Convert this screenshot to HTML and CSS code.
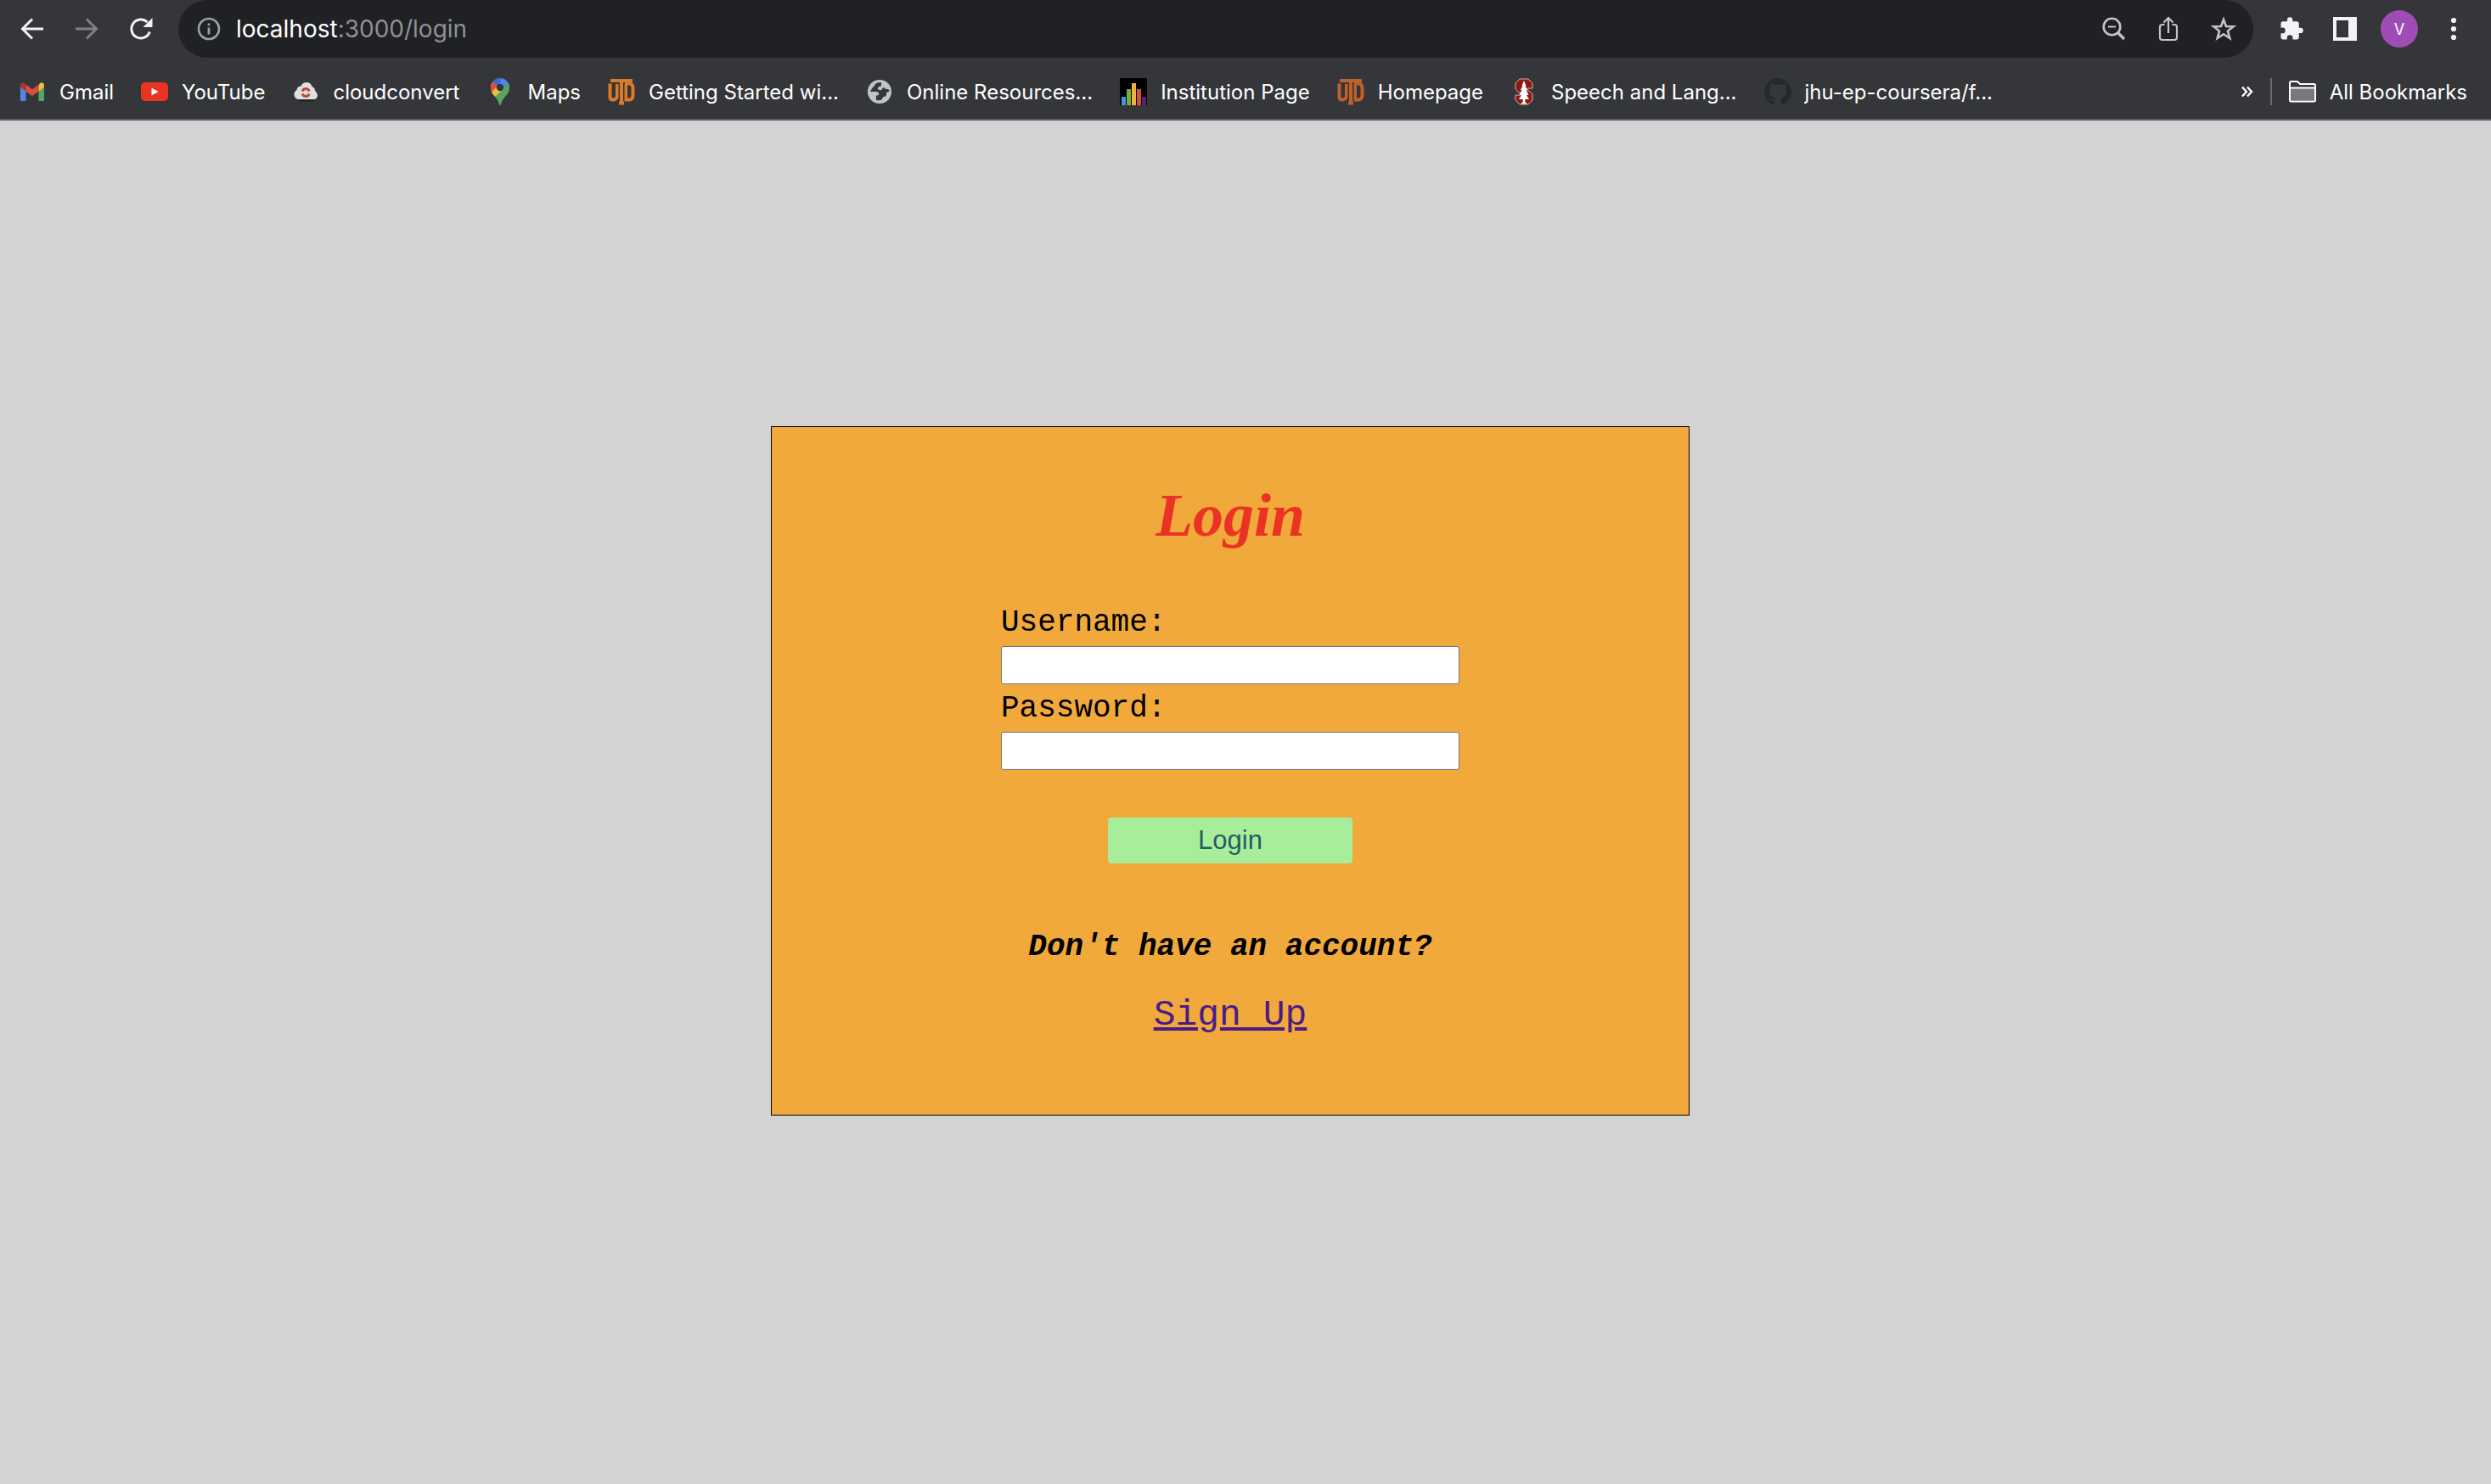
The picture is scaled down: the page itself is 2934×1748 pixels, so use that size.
FILE: index.html
```html
<!DOCTYPE html>
<html lang="en">
<head>
<meta charset="utf-8">
<title>Login</title>
<link rel="stylesheet" href="styles.css">
</head>
<body>
<header class="browser">
  <div class="toolbar">
    <button class="tool" aria-label="Back"><svg width="28" height="28" viewBox="0 0 28 28" fill="none" stroke="#f1f3f4" stroke-width="3"><path d="M27 14H3M14 2.500L2.500 14L14 25.500"/></svg></button>
    <button class="tool" aria-label="Forward"><svg width="28" height="28" viewBox="0 0 28 28" fill="none" stroke="#808184" stroke-width="3"><path d="M1 14H25M14 2.500L25.500 14L14 25.500"/></svg></button>
    <button class="tool" aria-label="Reload"><svg width="28" height="28" viewBox="0 0 28 28"><path d="M24.300 17.500A11 11 0 1 1 21.500 6" fill="none" stroke="#f1f3f4" stroke-width="3"/><path d="M27.500 1V12H16.500Z" fill="#f1f3f4"/></svg></button>
    <div class="omnibox">
      <button class="mini" aria-label="Site information"><svg width="28" height="28" viewBox="0 0 28 28"><circle cx="14" cy="14" r="12" fill="none" stroke="#9aa0a6" stroke-width="2.600"/><path d="M14 12.500V20.500M14 7.500V10.300" stroke="#9aa0a6" stroke-width="2.800"/></svg></button>
      <div class="url"><span class="host">localhost</span>:3000/login</div>
      <div class="omni-actions">
        <button class="mini" aria-label="Zoom"><svg width="28" height="28" viewBox="0 0 28 28" fill="none" stroke="#c4c5c7"><circle cx="11.500" cy="11.500" r="9.800" stroke-width="2.600"/><path d="M18.500 18.500L26 26" stroke-width="3.400"/><path d="M7 11.500H16" stroke-width="2"/></svg></button>
        <button class="mini" aria-label="Share"><svg width="28" height="30" viewBox="0 0 28 30" fill="none" stroke="#c4c5c7" stroke-width="2.200"><path d="M9.500 10H7a3 3 0 0 0-3 3v12a3 3 0 0 0 3 3h14a3 3 0 0 0 3-3V13a3 3 0 0 0-3-3h-2.500M14 20V3M8.500 7.500L14 2L19.500 7.500"/></svg></button>
        <button class="mini" aria-label="Bookmark this tab"><svg width="30" height="30" viewBox="0 0 30 30" fill="none" stroke="#c4c5c7" stroke-width="2.600"><path d="M15 4L18 12L26.500 12.300L19.900 17.600L22.300 26L15 21.200L7.700 26L10.100 17.600L3.500 12.300L12 12Z"/></svg></button>
      </div>
    </div>
    <div class="extras">
      <button class="tool" aria-label="Extensions"><svg width="30" height="30" viewBox="0 0 24 24" fill="#f1f3f4"><path d="M20.500 11H19V7c0-1.100-.9-2-2-2h-4V3.500a2.500 2.500 0 0 0-5 0V5H4c-1.100 0-2 .9-2 2v3.800h1.500a2.700 2.700 0 0 1 0 5.400H2V20c0 1.100.9 2 2 2h3.800v-1.500a2.700 2.700 0 0 1 5.400 0V22H17c1.100 0 2-.9 2-2v-4h1.500a2.500 2.500 0 0 0 0-5z"/></svg></button>
      <button class="tool panel" aria-label="Side panel"><svg width="28" height="28" viewBox="0 0 28 28"><path d="M0 0H28V28H0ZM4 4V24H18V4Z" fill="#f1f3f4" fill-rule="evenodd"/></svg></button>
      <button class="avatar" aria-label="Profile">V</button>
      <button class="tool menu" aria-label="Menu"><svg width="28" height="28" viewBox="0 0 28 28" fill="#f1f3f4"><circle cx="14" cy="4" r="3.100"/><circle cx="14" cy="14" r="3.100"/><circle cx="14" cy="24" r="3.100"/></svg></button>
    </div>
  </div>
  <nav class="bookmarks">
    <a class="mark" href="#"><svg width="32" height="32" viewBox="0 0 32 32"><path d="M2 8V25.500q0 1.500 1.500 1.500H8.500V14Z" fill="#4f86ec"/><path d="M30 8V25.500q0 1.500-1.500 1.500H23.500V14Z" fill="#58a55c"/><path d="M23.500 8.500V15.500L30 10.500V8Q29 4 25 6Z" fill="#f2bf42"/><path d="M8.500 8.500V15.500L2 10.500V8Q3 4 7 6Z" fill="#b6332a"/><path d="M8.500 7.500V15.500L16 21L23.500 15.500V7.500L16 13.200Z" fill="#d95040"/></svg>Gmail</a>
    <a class="mark" href="#"><svg width="32" height="32" viewBox="0 0 32 32"><rect y="5" width="32" height="22" rx="5" fill="#ea3323"/><path d="M12.500 11.500V20.500L20.500 16Z" fill="#fff"/></svg>YouTube</a>
    <a class="mark" href="#"><svg width="32" height="32" viewBox="0 0 32 32"><path d="M7 26.500H26" stroke="#202124" stroke-width="2"/><path d="M7 25A6 6 0 0 1 5.500 14Q6 9.500 10.500 9.500Q12 5 17 5Q22 5 23.500 10Q27 11 27 15Q30 17 30 20Q30 25 25 25Z" fill="#e0e0e0"/><path d="M12.200 15.500A4.200 4.200 0 0 1 20.200 15.500M20.200 18.500A4.200 4.200 0 0 1 12.200 18.500" fill="none" stroke="#c4463d" stroke-width="3"/></svg>cloudconvert</a>
    <a class="mark" href="#"><svg width="32" height="32" viewBox="0 0 32 32"><clipPath id="pin"><path d="M16 0C22 0 27 5 27 11C27 20 18.500 22 17 31Q16 33 15 31C13.500 22 5 20 5 11C5 5 10 0 16 0Z"/></clipPath><g clip-path="url(#pin)"><path d="M0 0H32V32H0Z" fill="#58a55c"/><path d="M0 4L8 4L16 11L8 22L0 22Z" fill="#f2bf42"/><path d="M0 4H8L16 11L6 18H0Z" fill="#d95040"/><path d="M7 4L12 0H20L16 11Z" fill="#3c6bd8"/><path d="M19 -1L28 5L16 14L14 8Z" fill="#4f86ec"/><path d="M28 5L8 22L12 27L20 31L30 16Z" fill="#58a55c"/><path d="M20.500 12L9 23L5 18L13 9Z" fill="#f2bf42"/></g><circle cx="16" cy="11" r="4.200" fill="#35363a"/></svg>Maps</a>
    <a class="mark" href="#"><svg class="utd" width="32" height="32" viewBox="0 0 32 32"><path d="M2.500 6.500V22Q2.500 25.500 6 25.500T11 22V7M21 7V25.500H25.500Q29.500 25 29.500 20V12Q29.500 7 25.500 6.500H20"/><path class="utd-gap" d="M16 3V30"/><path d="M3 3H29M16 3V30M13 29.500H19"/></svg>Getting Started wi...</a>
    <a class="mark" href="#"><svg width="32" height="32" viewBox="0 0 32 32"><circle cx="16" cy="16" r="14" fill="#c0c3c8"/><path d="M18 5Q11 5 10 9Q6 12 5 16H13Q16 17 15 20Q11 20 12 23L12 26Q20 27 20 22Q25 22 24 17Q26 17 28 15Q26 12 23 13Q22 10 19 12Q19 15 16 14Q12 13 15 10Q18 10 18 8Z" fill="#35363a"/></svg>Online Resources...</a>
    <a class="mark" href="#"><svg width="32" height="32" viewBox="0 0 32 32"><rect width="32" height="32" fill="#000"/><path d="M2 22h5v10H2z" fill="#4296d8"/><path d="M8 13h5v19H8z" fill="#7bab40"/><path d="M14 6h5v26h-5z" fill="#f0b23c"/><path d="M20 13h5v19h-5z" fill="#d8502f"/><path d="M26 22h5v10h-5z" fill="#52207f"/></svg>Institution Page</a>
    <a class="mark" href="#"><svg class="utd dark" width="32" height="32" viewBox="0 0 32 32"><path d="M2.500 6.500V22Q2.500 25.500 6 25.500T11 22V7M21 7V25.500H25.500Q29.500 25 29.500 20V12Q29.500 7 25.500 6.500H20"/><path class="utd-gap" d="M16 3V30"/><path d="M3 3H29M16 3V30M13 29.500H19"/></svg>Homepage</a>
    <a class="mark" href="#"><svg width="32" height="32" viewBox="0 0 32 32"><path d="M11 1H21L26 6V12H20V15H22L26 19V26L21 31H11L6 26V20H12V17H10L6 13V6Z" fill="#8c1b13" stroke="#dcb0ac"/><path d="M16 3L18.500 9L17.500 9L20 14H18.500L21.500 20H19L22 25H17.300V28L20 30.500H12L14.700 28V25H10L13 20H10.500L13.500 14H12L14.500 9H13.500Z" fill="#fff"/></svg>Speech and Lang...</a>
    <a class="mark" href="#"><svg width="32" height="32" viewBox="0 0 16 16" fill="#24292e"><path d="M8 0C3.580 0 0 3.580 0 8c0 3.540 2.290 6.530 5.470 7.590.4.070.55-.17.55-.38 0-.19-.01-.82-.01-1.490-2.010.37-2.530-.49-2.690-.94-.09-.23-.48-.94-.82-1.130-.28-.15-.68-.52-.01-.53.63-.01 1.080.58 1.230.82.72 1.210 1.870.87 2.330.66.07-.52.28-.87.51-1.070-1.780-.2-3.640-.89-3.640-3.950 0-.87.31-1.590.82-2.150-.08-.2-.36-1.020.08-2.120 0 0 .67-.21 2.200.82.64-.18 1.320-.27 2-.27s1.360.09 2 .27c1.530-1.040 2.200-.82 2.200-.82.44 1.100.16 1.920.08 2.120.51.56.82 1.270.82 2.150 0 3.070-1.870 3.750-3.650 3.950.29.25.54.73.54 1.480 0 1.070-.01 1.930-.01 2.200 0 .21.15.46.55.38A8.010 8.010 0 0 0 16 8c0-4.420-3.580-8-8-8z"/></svg>jhu-ep-coursera/f...</a>
    <div class="bookmarks-end">
      <button class="more" aria-label="More bookmarks"><svg width="14" height="14" viewBox="0 0 14 14" fill="none" stroke="#fff" stroke-width="2.400"><path d="M1 1.500L6 7L1 12.500M7 1.500L12 7L7 12.500"/></svg></button>
      <span class="rule"></span>
      <a class="mark" href="#"><svg width="32" height="32" viewBox="0 0 32 32"><path d="M1 5.500Q1 4 2.500 4H10L13 7H29.500Q31 7 31 8.500V26Q31 27.500 29.500 27.500H2.500Q1 27.500 1 26Z" fill="#35363a" stroke="#fff" stroke-width="2"/><path d="M2 12H30V26H2Z" fill="#77787a"/><path d="M1 11.500H31" stroke="#fff" stroke-width="2"/></svg>All Bookmarks</a>
    </div>
  </nav>
</header>
<main class="page">
  <form class="card">
    <h1 class="title">Login</h1>
    <div class="fields">
      <label class="label" for="username">Username:</label>
      <input class="input" id="username" type="text">
      <label class="label" for="password">Password:</label>
      <input class="input" id="password" type="password">
    </div>
    <button class="submit" type="button">Login</button>
    <p class="prompt">Don't have an account?</p>
    <a class="signup" href="#">Sign Up</a>
  </form>
</main>
</body>
</html>
```
FILE: styles.css
```css
* { box-sizing: border-box; }

body {
  margin: 0;
  min-height: 100vh;
  display: flex;
  flex-direction: column;
  background: #d3d3d3;
}

button { border: 0; padding: 0; background: none; font: inherit; }
svg { display: block; flex: none; }

.browser {
  background: #35363a;
  border-bottom: 2px solid #5f6063;
  color: #fff;
  font-family: Inter, "Liberation Sans", sans-serif;
  font-size: 24px;
}

.toolbar { display: flex; align-items: center; height: 68px; padding-left: 24px; }
.tool { width: 64px; display: flex; }

.omnibox {
  flex: 1;
  height: 68px;
  margin-left: -6px;
  padding: 0 20px 0 22px;
  display: flex;
  align-items: center;
  gap: 18px;
  background: #202124;
  border-radius: 34px;
}
.mini { display: flex; }
.url { flex: 1; font-size: 28px; color: #8f9093; }
.host { color: #fff; }
.omni-actions { display: flex; align-items: center; gap: 36px; }

.extras { display: flex; align-items: center; padding-left: 30px; }
.panel { width: 56px; }
.avatar {
  width: 44px;
  height: 44px;
  border-radius: 50%;
  background: #9e4db7;
  color: #fff;
  font-size: 18px;
}
.menu { width: 58px; margin-left: 28px; }

.bookmarks {
  display: flex;
  align-items: center;
  gap: 32px;
  height: 72px;
  padding: 8px 28px 0 22px;
}
.mark {
  display: flex;
  align-items: center;
  gap: 16px;
  color: #fff;
  text-decoration: none;
  white-space: nowrap;
}
.utd { fill: none; stroke: #d97b29; stroke-width: 4; }
.utd-gap { stroke: #35363a; stroke-width: 7; }
.dark { stroke: #c0602a; }
.bookmarks-end { margin-left: auto; display: flex; align-items: center; gap: 20px; }
.rule { width: 2px; height: 32px; background: #6b6c6f; }

.page {
  flex: 1;
  display: flex;
  align-items: center;
  justify-content: center;
  padding: 0 36px 74px 0;
}
.card {
  width: 100%;
  max-width: 1082px;
  padding: 62px 0 92px;
  display: flex;
  flex-direction: column;
  align-items: center;
  background: #f2a93b;
  border: 1px solid #000;
  font-family: "Liberation Mono", monospace;
  font-size: 36px;
  line-height: 42px;
}
.title {
  margin: 0 0 64px;
  color: #ea3323;
  font-family: "Apple Chancery", "Liberation Serif", serif;
  font-style: italic;
  font-weight: 700;
  font-size: 72px;
  line-height: 84px;
}
.fields { width: 50%; display: flex; flex-direction: column; }
.label { margin-bottom: 6px; }
.input {
  height: 45px;
  padding: 4px 8px;
  background: #fff;
  border: 1px solid #767676;
  border-radius: 3px;
  font-size: 28px;
}
.input + .label { margin-top: 8px; }
.submit {
  width: 288px;
  height: 54px;
  margin-top: 56px;
  background: #a8ee9a;
  border-radius: 4px;
  color: #2b5a62;
  font-family: "Liberation Sans", sans-serif;
  font-size: 31px;
}
.prompt { margin: 78px 0 34px; font-weight: 700; font-style: italic; }
.signup { color: #4b1b87; font-size: 43px; line-height: 50px; }
```
